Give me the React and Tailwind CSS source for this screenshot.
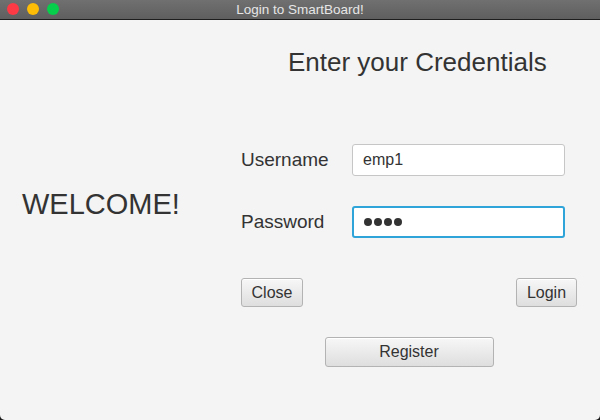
export default function App() {
  const font = { fontFamily: '"Liberation Sans", Arial, sans-serif' };
  const btn =
    'h-[29px] rounded-[3px] border border-[#b3b3b3] bg-gradient-to-b from-[#f7f7f7] to-[#dedede] text-[16px] text-[#333] shadow-[inset_0_1px_0_#ffffff]';

  return (
    <div className="w-[600px] h-[420px] bg-[#1a1a1a]" style={font}>
      <div className="w-full h-full flex flex-col overflow-hidden rounded-b-[5px] bg-[#f4f4f4]">
        {/* title bar */}
        <div className="relative h-[20px] shrink-0 border-b border-[#1e1e1e] bg-gradient-to-b from-[#707070] to-[#5f5f5f] flex items-center justify-center">
          <div className="absolute left-[7px] top-[3px] flex gap-[8px]">
            <span className="shrink-0 w-[12px] h-[12px] rounded-full bg-[#fc3a45]" />
            <span className="shrink-0 w-[12px] h-[12px] rounded-full bg-[#fdbc06]" />
            <span className="shrink-0 w-[12px] h-[12px] rounded-full bg-[#06d04b]" />
          </div>
          <span className="text-[13.5px] leading-[19px] text-[#e6e6e6]">Login to SmartBoard!</span>
        </div>

        {/* body */}
        <div className="flex-1 flex">
          <div className="w-[241px] shrink-0 flex items-center pl-[22px] pb-[33px]">
            <span className="text-[29px] leading-[34px] text-[#333]">WELCOME!</span>
          </div>

          <div className="w-[336px] flex flex-col pt-[27px]">
            <h1 className="pl-[47px] text-[26px] leading-[30px] text-[#333]">Enter your Credentials</h1>

            <div className="mt-[67px] flex items-center h-[32px]">
              <span className="w-[111px] text-[19px] text-[#333]">Username</span>
              <div className="w-[213px] h-[32px] rounded-[3px] border border-[#c6c6c6] bg-white flex items-center pl-[10px] text-[16px] text-[#333]">
                emp1
              </div>
            </div>

            <div className="mt-[30px] flex items-center h-[32px]">
              <span className="w-[111px] text-[19px] text-[#333]">Password</span>
              <div className="w-[213px] h-[32px] rounded-[3px] border-2 border-[#2ea4d9] bg-white flex items-center pl-[10px] gap-[2px]">
                <span className="w-[8px] h-[8px] rounded-full bg-[#333]" />
                <span className="w-[8px] h-[8px] rounded-full bg-[#333]" />
                <span className="w-[8px] h-[8px] rounded-full bg-[#333]" />
                <span className="w-[8px] h-[8px] rounded-full bg-[#333]" />
              </div>
            </div>

            <div className="mt-[40px] flex justify-between">
              <button className={`${btn} w-[62px]`}>Close</button>
              <button className={`${btn} w-[61px]`}>Login</button>
            </div>

            <div className="mt-[30px] flex justify-center">
              <button className={`${btn} w-[169px] h-[30px]`}>Register</button>
            </div>
          </div>
        </div>
      </div>
    </div>
  );
}
